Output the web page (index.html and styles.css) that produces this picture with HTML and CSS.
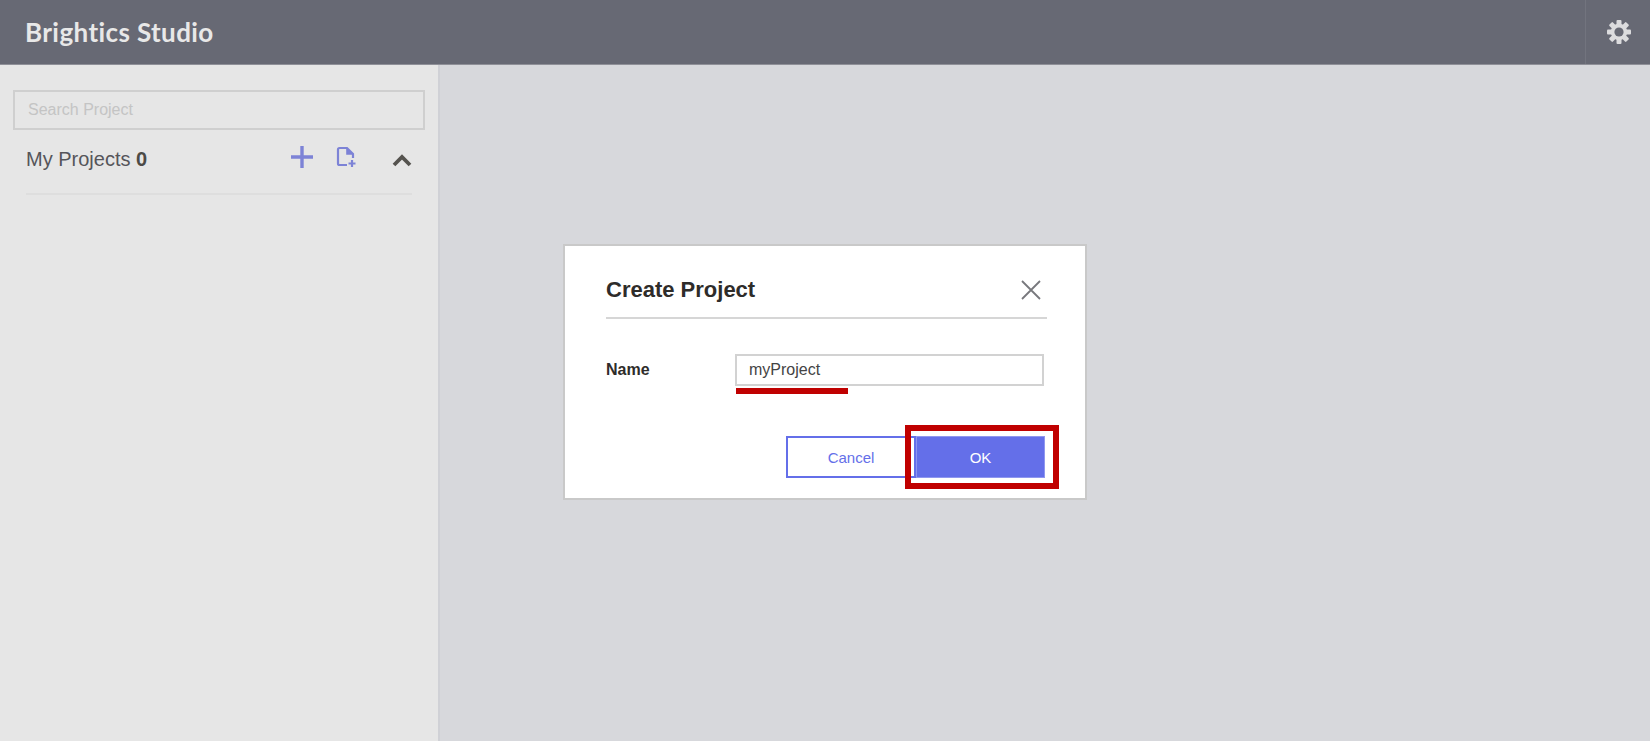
FILE: index.html
```html
<!DOCTYPE html>
<html lang="en">
<head>
    <meta charset="UTF-8">
    <title>Brightics Studio</title>
    <link rel="stylesheet" href="styles.css">
</head>
<body>

    <!-- Top bar -->
    <header class="topbar">
        <div class="logo">Brightics Studio</div>
        <div class="settings">
            <svg width="26" height="26" viewBox="0 0 26 26">
                <g fill="#dcdcde">
                    <rect x="10.5" y="1" width="5" height="24" rx="1"/>
                    <rect x="10.5" y="1" width="5" height="24" rx="1" transform="rotate(45 13 13)"/>
                    <rect x="10.5" y="1" width="5" height="24" rx="1" transform="rotate(90 13 13)"/>
                    <rect x="10.5" y="1" width="5" height="24" rx="1" transform="rotate(135 13 13)"/>
                </g>
                <circle cx="13" cy="13" r="6.4" fill="none" stroke="#dcdcde" stroke-width="3.6"/>
                <circle cx="13" cy="13" r="4.6" fill="#676974"/>
            </svg>
        </div>
    </header>

    <div class="workspace">
        <!-- Left side project list -->
        <aside class="sidebar">
            <input class="search" type="text" placeholder="Search Project">
            <div class="projects-head">
                <div class="projects-title">My Projects <b>0</b></div>
                <div class="projects-tools">
                    <svg class="tool-plus" width="24" height="24" viewBox="0 0 24 24">
                        <path d="M12 1v22M1 12h22" stroke="#7d83d6" stroke-width="3.4" fill="none"/>
                    </svg>
                    <svg class="tool-file" width="21" height="22" viewBox="0 0 21 22">
                        <path d="M11 19H3.5A1.5 1.5 0 0 1 2 17.500V3.500A1.500 1.500 0 0 1 3.500 2H11l6 6v4" stroke="#7d83d6" stroke-width="2.2" fill="none"/>
                        <path d="M11 2.500V8h6" stroke="#7d83d6" stroke-width="1.600" fill="#7d83d6"/>
                        <path d="M16 14v7M12.500 17.500h7" stroke="#7d83d6" stroke-width="2.200" fill="none"/>
                    </svg>
                    <svg class="tool-chevron" width="20" height="13" viewBox="0 0 20 13">
                        <path d="M2 11l8-8 8 8" stroke="#55534f" stroke-width="3.800" fill="none"/>
                    </svg>
                </div>
            </div>
        </aside>
        <main class="content"></main>
    </div>

    <!-- Create project dialog -->
    <div class="overlay">
        <div class="dialog">
            <div class="dialog-head">
                <h2>Create Project</h2>
                <svg width="22" height="22" viewBox="0 0 22 22">
                    <path d="M2 2l18 18M20 2L2 20" stroke="#77787c" stroke-width="1.800" fill="none"/>
                </svg>
            </div>
            <div class="field">
                <label>Name</label>
                <div class="field-input">
                    <input class="name-input" type="text" value="myProject">
                    <div class="mark-line"></div>
                </div>
            </div>
            <div class="dialog-btns">
                <button class="btn btn-cancel">Cancel</button>
                <button class="btn btn-ok">OK</button>
                <div class="mark-box"></div>
            </div>
        </div>
    </div>

</body>
</html>
```

FILE: styles.css
```css
* { margin: 0; padding: 0; box-sizing: border-box; font-family: "Liberation Sans", Arial, sans-serif; }

body {
    width: 100%;
    height: 100vh;
    overflow: hidden;
    display: flex;
    flex-direction: column;
    background: #d7d8dc;
}

/* Top bar */
.topbar {
    height: 65px;
    flex-shrink: 0;
    background: #676974;
    border-bottom: 1px solid #8f9098;
    display: flex;
    align-items: center;
    justify-content: space-between;
}

.logo {
    margin-left: 25px;
    font-family: Lato, sans-serif;
    font-size: 26px;
    font-weight: 700;
    color: #e8e8e8;
    letter-spacing: 0.4px;
}

.settings {
    width: 65px;
    height: 64px;
    border-left: 1px solid #72747e;
    display: flex;
    align-items: center;
    justify-content: center;
    padding-left: 1px;
}

.workspace {
    flex: 1;
    display: flex;
}

/* Left side */
.sidebar {
    width: 440px;
    background: #e6e6e6;
    border-right: 2px solid #d0d1d6;
    padding: 25px 13px 0;
}

.search {
    display: block;
    width: 412px;
    height: 40px;
    padding: 0 13px;
    background: transparent;
    border: 2px solid #cfcfcf;
    font-size: 16px;
    outline: none;
}

.search::placeholder { color: #c4c4c4; opacity: 1; }

.projects-head {
    width: 386px;
    height: 65px;
    margin-left: 13px;
    padding-bottom: 5px;
    border-bottom: 2px solid #dedede;
    display: flex;
    align-items: center;
    justify-content: space-between;
}

.projects-title {
    font-size: 20px;
    color: #55555a;
}

.projects-title b { color: #4c4a46; }

.projects-tools {
    display: flex;
    align-items: center;
}

.tool-plus { margin-right: 22px; margin-top: -5px; }
.tool-file { margin-right: 35px; margin-top: -4px; }
.tool-chevron { margin-right: 0; margin-top: 2px; }

.content { flex: 1; }

/* Dialog */
.overlay {
    position: fixed;
    inset: 0;
    display: flex;
    align-items: center;
    justify-content: center;
    padding-top: 3px;
}

.dialog {
    width: 524px;
    height: 256px;
    background: #fff;
    border: 2px solid #c9c9c9;
    padding: 0 38px 0 41px;
}

.dialog-head {
    height: 73px;
    border-bottom: 2px solid #d6d6d6;
    display: flex;
    align-items: center;
    justify-content: space-between;
    padding: 16px 5px 0 0;
}

.dialog-head h2 {
    font-size: 22px;
    font-weight: 700;
    color: #2e2c2a;
}

.field {
    display: flex;
    align-items: center;
    margin-top: 35px;
}

.field label {
    width: 129px;
    font-size: 16px;
    font-weight: 700;
    color: #2e2c2a;
}

.field-input { position: relative; }

.name-input {
    display: block;
    width: 309px;
    height: 32px;
    padding: 0 12px;
    border: 2px solid #d2d2d2;
    font-size: 16px;
    color: #444;
    outline: none;
}

.mark-line {
    position: absolute;
    left: 1px;
    top: 34px;
    width: 112px;
    height: 6px;
    background: #c00000;
}

.dialog-btns {
    position: relative;
    display: flex;
    justify-content: flex-end;
    margin-top: 50px;
    margin-right: 2px;
}

.btn {
    height: 42px;
    font-size: 15px;
    cursor: pointer;
}

.btn-cancel {
    width: 130px;
    background: #fff;
    border: 2px solid #646fe9;
    color: #646fe9;
}

.btn-ok {
    width: 129px;
    background: #646fe9;
    border: 1px solid #8f97ef;
    color: #fff;
}

/* Red highlight round the OK button */
.mark-box {
    position: absolute;
    right: -14px;
    top: -11px;
    width: 154px;
    height: 64px;
    border: 6px solid #c00000;
}
```
